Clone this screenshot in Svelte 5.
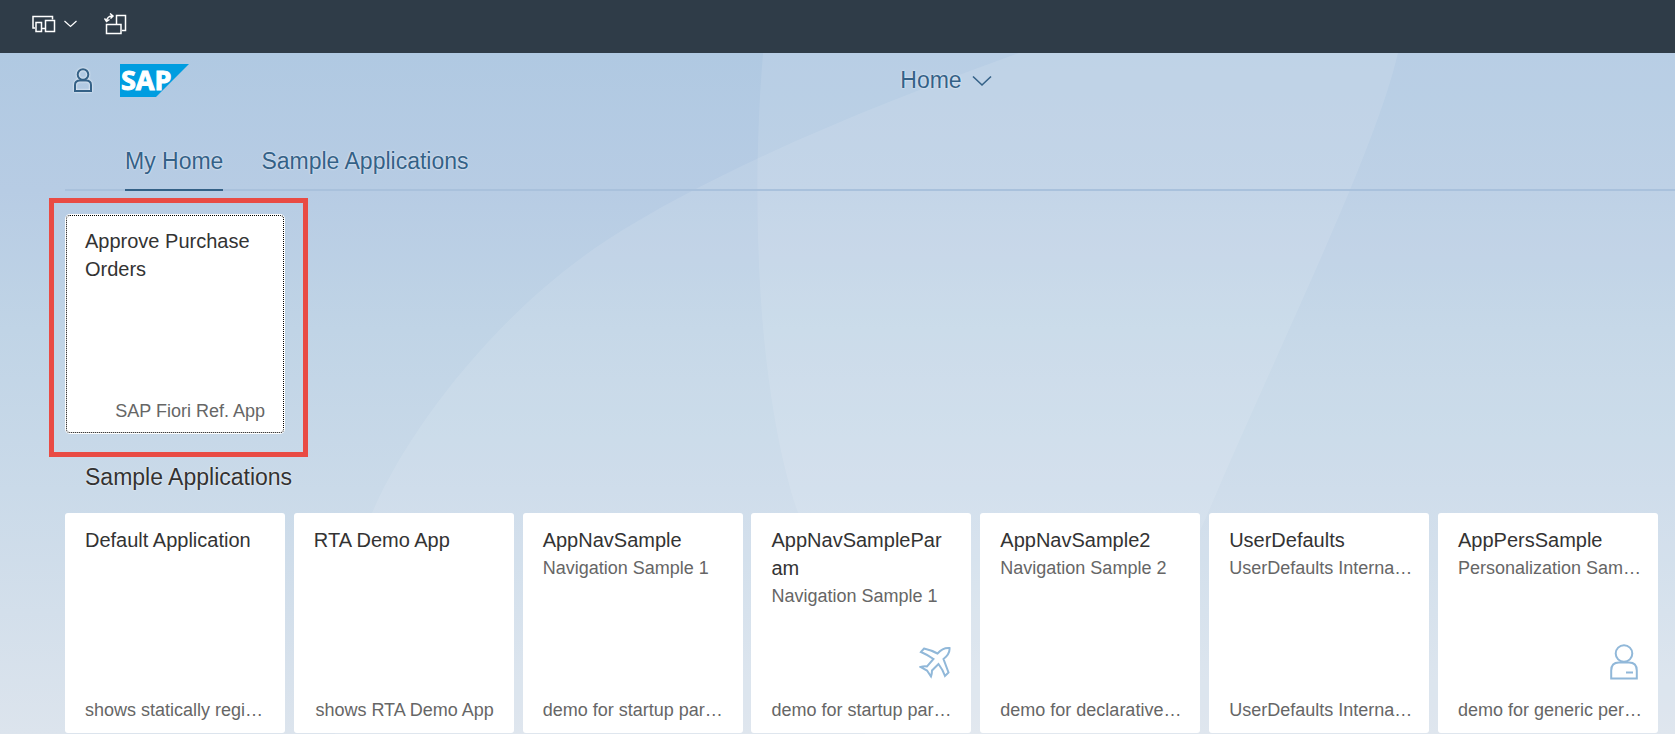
<script>
  const tabs = [
    { label: 'My Home', active: true },
    { label: 'Sample Applications', active: false }
  ];

  const homeTiles = [
    { title: 'Approve Purchase Orders', footer: 'SAP Fiori Ref. App', focused: true }
  ];

  const sampleTiles = [
    { title: 'Default Application', footer: 'shows statically regi…' },
    { title: 'RTA Demo App', footer: 'shows RTA Demo App' },
    { title: 'AppNavSample', subtitle: 'Navigation Sample 1', footer: 'demo for startup par…' },
    { title: 'AppNavSampleParam', subtitle: 'Navigation Sample 1', footer: 'demo for startup par…', icon: 'flight' },
    { title: 'AppNavSample2', subtitle: 'Navigation Sample 2', footer: 'demo for declarative…' },
    { title: 'UserDefaults', subtitle: 'UserDefaults Interna…', footer: 'UserDefaults Interna…' },
    { title: 'AppPersSample', subtitle: 'Personalization Sam…', footer: 'demo for generic per…', icon: 'person' }
  ];
</script>

{#snippet tile(t)}
  <a class="tile" class:focused={t.focused} href="#app">
    <span class="title">{t.title}</span>
    {#if t.subtitle}<span class="subtitle">{t.subtitle}</span>{/if}
    <span class="space"></span>
    {#if t.icon === 'flight'}
      <svg class="tile-icon" width="32" height="36" viewBox="0 0 32 36" aria-hidden="true">
        <path d="M2 8 5 4.500 Q12 6 18.500 9.500 C22 5.500 25 3.500 30.500 4 C31 8.500 29 11.500 24.500 15 L29.500 28.500 26 32 Q24 26 19.500 20 L13 26.500 Q13 29.500 12 32.500 L8 26.500 1.500 23 Q5 22 8 22.500 L14.500 15 Q8 10.500 2 8 Z" />
      </svg>
    {:else if t.icon === 'person'}
      <svg class="tile-icon" width="28" height="36" viewBox="0 0 28 36" aria-hidden="true">
        <circle cx="14" cy="9.500" r="8.300" />
        <path d="M1.200 34.500 V26.500 Q1.200 18.500 9 18.500 H19 Q26.800 18.500 26.800 26.500 V34.500 Z M16 28.500 H23" />
      </svg>
    {/if}
    <span class="footer" class:clipped={t.footer.endsWith('…')}>{t.footer}</span>
  </a>
{/snippet}

<div class="page">
  <svg class="backdrop" viewBox="0 0 1675 681" preserveAspectRatio="none" aria-hidden="true">
    <path d="M763 0 C752 130 754 330 798 460 Q820 560 865 681 H1675 V0 Z" />
    <path d="M1019 0 C880 50 720 114 607 187 C500 257 410 372 372 460 Q340 570 335 681 H1110 L1208 460 C1278 295 1375 100 1398 0 Z" />
  </svg>

  <div class="toolbar">
    <button class="devices" aria-label="Device preview">
      <svg width="24" height="18" viewBox="0 0 24 18" aria-hidden="true">
        <path d="M3 13 H1 V1.500 H20.500 V4.500 M10 13.500 H13" />
        <path d="M4 7.500 H9.500 V16.500 H4 Z M13.500 5.500 H22.500 V16.500 H13.500 Z" />
      </svg>
      <svg class="thin" width="13" height="8" viewBox="0 0 13 8" aria-hidden="true">
        <path d="M.5 1 6.500 6.500 12.500 1" />
      </svg>
    </button>
    <button aria-label="Rotate device">
      <svg width="24" height="22" viewBox="0 0 24 22" aria-hidden="true">
        <path d="M12.500 11 V2.500 H21.500 V17.500 H18" />
        <path d="M2.500 11.500 H17 V20.500 H2.500 Z" />
        <path d="M2.500 8 C3 5 5 3 8.500 3 M6 .5 9 3 6.500 5.500 M.5 5.500 2.500 8.500 5.500 6.500" />
      </svg>
    </button>
  </div>

  <header>
    <div class="brand">
      <button aria-label="User menu">
        <svg class="user" width="18" height="25" viewBox="0 0 18 25" aria-hidden="true">
          <circle cx="9" cy="6.500" r="5.300" />
          <path d="M1 23 V17 Q1 12.500 6 12.500 H12 Q17 12.500 17 17 V23 Z" />
        </svg>
      </button>
      <svg class="mark" width="69" height="33" viewBox="0 0 69 33" role="img" aria-label="SAP">
        <path fill="#009de0" d="M0 0 H69 L36 33 H0 Z" />
        <text x="1" y="26" class="logo">SAP</text>
      </svg>
    </div>
    <button class="home">
      Home
      <svg width="20" height="12" viewBox="0 0 20 12" aria-hidden="true">
        <path d="M1 1.500 10 10 19 1.500" />
      </svg>
    </button>
  </header>

  <nav>
    {#each tabs as tab}
      <a href="#app" class:active={tab.active}>{tab.label}</a>
    {/each}
  </nav>

  <main>
    <section class="tiles">
      {#each homeTiles as t}
        <div class="marked">{@render tile(t)}</div>
      {/each}
    </section>
    <h2>Sample Applications</h2>
    <section class="tiles">
      {#each sampleTiles as t}{@render tile(t)}{/each}
    </section>
  </main>
</div>

<style>
  :global(body) {
    margin: 0;
  }

  .page {
    position: relative;
    min-height: 100vh;
    box-sizing: border-box;
    padding-bottom: 1px;
    overflow: hidden;
    background: linear-gradient(#b0c9e2 53px, #b7cce4 190px, #c0d4e6 330px, #cadae9 490px, #dce4ed);
    font-family: "Liberation Sans", Arial, sans-serif;
    color: #333;
  }

  .backdrop {
    position: absolute;
    inset: 53px 0 0;
    width: 100%;
    height: calc(100% - 53px);
    fill: #fff;
    fill-opacity: 0.1;
  }

  .toolbar,
  header,
  nav,
  main {
    position: relative;
  }

  button {
    display: flex;
    align-items: center;
    padding: 0;
    border: 0;
    background: none;
    color: inherit;
    font: inherit;
    cursor: pointer;
  }

  svg {
    display: block;
  }

  button svg {
    fill: none;
    stroke: currentColor;
  }

  .toolbar {
    display: flex;
    align-items: center;
    gap: 27px;
    height: 53px;
    box-sizing: border-box;
    padding: 0 32px 6px;
    background: #2f3c48;
    color: #fff;
  }

  .toolbar svg {
    stroke-width: 1.5;
  }

  .toolbar .thin {
    stroke-width: 1.2;
  }

  .devices {
    gap: 8px;
  }

  header {
    display: grid;
    grid-template-columns: 43fr 37fr;
    align-items: center;
    height: 55px;
    color: #346187;
  }

  .brand {
    display: flex;
    align-items: center;
    gap: 28px;
    padding-left: 74px;
  }

  .user {
    stroke-width: 2;
    filter: drop-shadow(0 0 1px #fff);
  }

  .mark {
    overflow: visible;
  }

  .logo {
    font: bold 27px "Open Sans", "Noto Sans", sans-serif;
    fill: #fff;
    stroke: #fff;
    stroke-width: 1;
  }

  .home {
    gap: 10px;
    font-size: 23px;
    text-shadow: 0 0 2px #fff;
  }

  .home svg {
    stroke-width: 1.6;
  }

  nav {
    display: flex;
    gap: 38px;
    margin-left: 65px;
    padding: 37px 60px 0;
    box-shadow: inset 0 -2px #a9c1dc;
  }

  nav a {
    padding-bottom: 11px;
    border-bottom: 2px solid transparent;
    color: #346187;
    font-size: 23px;
    line-height: 33px;
    text-decoration: none;
    text-shadow: 0 0 2px #fff;
  }

  nav a.active {
    border-color: #346187;
  }

  main {
    padding: 23px 17px 0 65px;
  }

  .tiles {
    display: grid;
    grid-template-columns: repeat(auto-fill, 220px);
    justify-content: space-between;
    gap: 8px;
  }

  h2 {
    margin: 0;
    padding: 27px 20px 19px;
    font-size: 23px;
    font-weight: normal;
    line-height: 33px;
    text-shadow: 0 0 2px #fff;
  }

  .tile {
    display: flex;
    flex-direction: column;
    position: relative;
    box-sizing: border-box;
    width: 220px;
    height: 220px;
    padding: 13px 20px 9px;
    border-radius: 3px;
    background: #fff;
    color: #666;
    font-size: 18px;
    line-height: 28px;
    text-decoration: none;
  }

  .focused {
    outline: 1px dotted #000;
    outline-offset: -2px;
    border-radius: 5px;
  }

  .title {
    color: #333;
    font-size: 20px;
    line-height: 28px;
    overflow-wrap: anywhere;
  }

  .subtitle,
  .footer {
    white-space: nowrap;
  }

  .space {
    flex: 1;
  }

  .footer {
    align-self: flex-end;
  }

  .clipped {
    align-self: stretch;
  }

  .tile-icon {
    align-self: flex-end;
    margin-bottom: 16px;
    fill: none;
    stroke: #91b8d9;
    stroke-width: 2;
  }

  .marked {
    position: relative;
  }

  .marked::after {
    content: "";
    position: absolute;
    inset: -16px -23px -23px -16px;
    border: 5px solid #e94b44;
    pointer-events: none;
  }
</style>
